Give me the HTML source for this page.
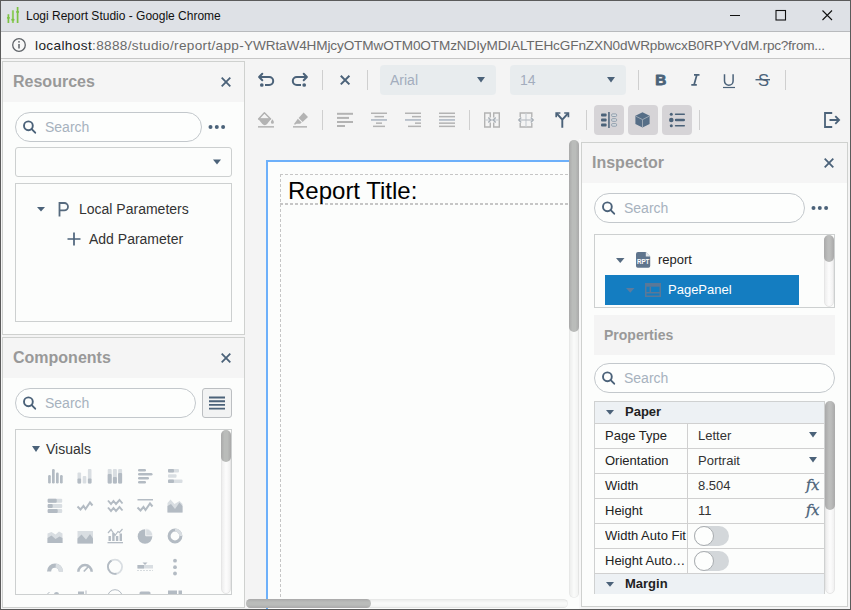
<!DOCTYPE html>
<html>
<head>
<meta charset="utf-8">
<title>Logi Report Studio - Google Chrome</title>
<style>
*{box-sizing:border-box;margin:0;padding:0}
html,body{width:851px;height:610px;overflow:hidden;background:#f4f4f4;font-family:"Liberation Sans",Arial,sans-serif;}
#win{position:absolute;left:0;top:0;width:851px;height:610px;overflow:hidden;background:#f4f4f4}
#win div,#win svg{position:absolute}
#win svg{overflow:visible}
.t{white-space:nowrap;line-height:1}
#tb{left:0;top:0;width:851px;height:31px;background:#dee1e6}
#ab{left:0;top:31px;width:851px;height:27px;background:#f8f8f8}
#abl{left:0;top:58px;width:851px;height:1px;background:#c6c6c6}
.panel{border:1px solid #cfd1cf;background:#fcfdfc}
.phead{height:40px;background:#f5f5f5}
.ptitle{font-weight:bold;font-size:16px;color:#999}
.search{border:1px solid #c3c8cc;border-radius:15px;background:#fdfefd;height:30px}
.ph{font-size:14px;color:#a7b2be}
.box{border:1px solid #cdd0d0;background:#fcfdfc}
.sep{width:1px;height:20px;background:#cfcfcf}
.dd{background:#e8ecee;border-radius:4px;height:30px}
.tg{background:#d6d4d7;border-radius:4px;width:30px;height:30px}
.lbl{font-size:13px;color:#222}
.val{font-size:13px;color:#333}
.hl{height:1px;background:#d0d0d0}
.fx{font-family:"DejaVu Serif","Liberation Serif",serif;font-style:italic;font-size:14.5px;color:#4b6279;-webkit-text-stroke:0.3px #4b6279}
.sw{width:35px;height:20px;border-radius:10px;background:#d3d7da}
.kn{width:20px;height:20px;border-radius:10px;background:#fdfefd;border:1px solid #a9adb0}
</style>
</head>
<body>
<div id="win">
<!-- CHROME -->
<div id="tb"></div>
<div id="ab"></div>
<div id="abl"></div>
<div style="left:0;top:31px;width:851px;height:1px;background:#b8babd"></div>
<svg style="left:0;top:0" width="24" height="26" viewBox="0 0 24 26" fill="none" stroke="#7bc143" stroke-width="1.700">
 <path d="M8.400 14.300v8.600M17.600 7.100v15.800"/><path d="M12.900 10.300v12.600" stroke-width="2" stroke="#8fcc5f"/>
 <rect x="6.900" y="16.900" width="3" height="1.900" rx=".8" fill="#7bc143" stroke="none"/><rect x="11.300" y="18.800" width="3.200" height="1.900" rx=".8" fill="#7bc143" stroke="none"/><rect x="16.100" y="11" width="3" height="1.900" rx=".8" fill="#7bc143" stroke="none"/>
</svg>
<div class="t" id="ttl" style="left:26px;top:10px;font-size:12px;color:#111">Logi Report Studio - Google Chrome</div>
<svg style="left:725px;top:5px" width="120" height="22" viewBox="0 0 120 22" fill="none" stroke="#111" stroke-width="1">
 <path d="M5 10.5h10"/><rect x="51" y="5.500" width="9.500" height="9.500" stroke-width="1.100"/><path d="M97.500 5.500l9.500 9.500M107 5.500l-9.500 9.500" stroke-width="1.100"/>
</svg>
<svg style="left:11px;top:37px" width="16" height="16" viewBox="0 0 16 16" fill="none" stroke="#5f6368" stroke-width="1.300">
 <circle cx="8" cy="8" r="6.300"/><path d="M8 7v4.500" stroke-width="1.500"/><circle cx="8" cy="4.800" r=".9" fill="#5f6368" stroke="none"/>
</svg>
<div class="t" id="url" style="left:35px;top:39px;font-size:13.6px;color:#6a6a6a"><span id="u1" style="color:#202124;letter-spacing:0.38px">localhost</span><span id="u2" style="letter-spacing:0.32px">:8888/studio/report/app-</span><span id="u3" style="letter-spacing:-0.136px">YWRtaW4HMjcyOTMwOTM0OTMzNDIyMDIALTEHcGFnZXN0dWRpbwcxB0RPYVdM</span><span id="u4" style="letter-spacing:-0.25px">.rpc?from...</span></div>
<!-- RESOURCES -->
<div class="panel" style="left:2px;top:61px;width:243px;height:274px"></div>
<div class="phead" style="left:3px;top:62px;width:241px"></div>
<div class="t ptitle" style="left:13px;top:74px">Resources</div>
<svg style="left:221px;top:77px" width="10" height="10" viewBox="0 0 10 10" stroke="#4b6279" stroke-width="1.800" fill="none"><path d="M.7.7l8.600 8.600M9.300.7L.7 9.300"/></svg>
<div class="search" style="left:15px;top:112px;width:187px"></div>
<svg style="left:23px;top:120px" width="14" height="14" viewBox="0 0 14 14" fill="none" stroke="#4b6279" stroke-width="1.900" stroke-linecap="round"><circle cx="5.400" cy="5.800" r="4.400"/><path d="M8.700 9.100l3.500 3.600"/></svg>
<div class="t ph" style="left:45px;top:120px">Search</div>
<svg style="left:208px;top:124px" width="18" height="6" viewBox="0 0 18 6" fill="#4b6279"><circle cx="2.500" cy="3" r="2"/><circle cx="8.800" cy="3" r="2"/><circle cx="15.100" cy="3" r="2"/></svg>
<div class="box" style="left:15px;top:147px;width:217px;height:30px;border-radius:3px"></div>
<svg style="left:213px;top:159px" width="8" height="6" viewBox="0 0 8 6" fill="#4b6279"><path d="M0 .5h8L4 5.500z"/></svg>
<div class="box" style="left:15px;top:183px;width:217px;height:139px"></div>
<svg style="left:37px;top:207px" width="8" height="5" viewBox="0 0 8 5" fill="#4b6279"><path d="M0 0h8L4 4.500z"/></svg>
<svg style="left:58px;top:202px" width="12" height="15" viewBox="0 0 12 15" fill="none" stroke="#566a7e" stroke-width="1.800"><path d="M1.500 14.500V1h4.800a3.700 3.700 0 0 1 0 7.400H1.500"/></svg>
<div class="t" style="left:79px;top:202px;font-size:14px;color:#333">Local Parameters</div>
<svg style="left:67px;top:232px" width="14" height="14" viewBox="0 0 14 14" fill="none" stroke="#4b6279" stroke-width="1.700"><path d="M7 .5v13M.5 7h13"/></svg>
<div class="t" style="left:89px;top:232px;font-size:14px;color:#333">Add Parameter</div>

<!-- COMPONENTS -->
<div class="panel" style="left:2px;top:337px;width:243px;height:271px"></div>
<div class="phead" style="left:3px;top:338px;width:241px"></div>
<div class="t ptitle" style="left:13px;top:350px">Components</div>
<svg style="left:221px;top:353px" width="10" height="10" viewBox="0 0 10 10" stroke="#4b6279" stroke-width="1.800" fill="none"><path d="M.7.7l8.600 8.600M9.300.7L.7 9.300"/></svg>
<div class="search" style="left:15px;top:388px;width:181px"></div>
<svg style="left:23px;top:396px" width="14" height="14" viewBox="0 0 14 14" fill="none" stroke="#4b6279" stroke-width="1.900" stroke-linecap="round"><circle cx="5.400" cy="5.800" r="4.400"/><path d="M8.700 9.100l3.500 3.600"/></svg>
<div class="t ph" style="left:45px;top:396px">Search</div>
<div style="left:202px;top:388px;width:30px;height:30px;border:1px solid #bcbfc2;border-radius:3px;background:#f2f3f3"></div>
<svg style="left:209px;top:396px" width="16" height="14" viewBox="0 0 16 14" stroke="#4b6279" stroke-width="1.900" fill="none"><path d="M0 1.500h16M0 5.200h16M0 8.900h16M0 12.600h16"/></svg>
<div class="box" style="left:15px;top:429px;width:217px;height:166px"></div>
<div style="left:221px;top:430px;width:10px;height:164px;border-radius:5px;background:linear-gradient(90deg,#eee,#fbfbfb 45%,#fbfbfb 60%,#f1f1f1);border:1px solid #e6e6e6"></div>
<div style="left:221px;top:430px;width:10px;height:32px;border-radius:5px;background:linear-gradient(90deg,#a9a9a9,#babcba 35%,#babcba 65%,#a9a9a9)"></div>
<svg style="left:32px;top:446px" width="8" height="6" viewBox="0 0 8 6" fill="#4b6279"><path d="M0 0h8L4 6z"/></svg>
<div class="t" style="left:46px;top:442px;font-size:14px;color:#333">Visuals</div>
<!-- component icons -->
<div style="left:16px;top:430px;width:205px;height:164px;overflow:hidden">
<svg style="left:31px;top:38px" width="16" height="16" viewBox="0 0 16 16"><rect x="1.1" y="7" width="2.700" height="8.5" rx="1.3" fill="#b3bbc3"/><rect x="5" y="1" width="2.700" height="14.5" rx="1.3" fill="#b3bbc3"/><rect x="9" y="4.5" width="2.700" height="11" rx="1.3" fill="#b3bbc3"/><rect x="13" y="7" width="2.700" height="8.5" rx="1.3" fill="#b3bbc3"/></svg>
<svg style="left:61px;top:38px" width="16" height="16" viewBox="0 0 16 16"><rect x="0.5" y="4.5" width="3.6" height="11" rx="1" fill="#d9dee2"/><rect x="0.5" y="10.5" width="3.6" height="5" rx="1" fill="#b3bbc3"/><rect x="5.7" y="8" width="3.6" height="7.5" rx="1" fill="#d9dee2"/><rect x="10.9" y="1" width="3.6" height="14.5" rx="1" fill="#d9dee2"/><rect x="10.9" y="10.5" width="3.6" height="5" rx="1" fill="#b3bbc3"/></svg>
<svg style="left:91px;top:38px" width="16" height="16" viewBox="0 0 16 16"><rect x="0.7" y="1" width="4" height="14.5" rx="1" fill="#d9dee2"/><rect x="0.7" y="6" width="4" height="9.5" rx="1" fill="#b3bbc3"/><rect x="5.9" y="1" width="4" height="14.5" rx="1" fill="#d9dee2"/><rect x="5.9" y="9" width="4" height="6.5" rx="1" fill="#b3bbc3"/><rect x="11.1" y="1" width="4" height="14.5" rx="1" fill="#d9dee2"/><rect x="11.1" y="5" width="4" height="10.5" rx="1" fill="#b3bbc3"/></svg>
<svg style="left:121px;top:38px" width="16" height="16" viewBox="0 0 16 16"><rect x="1" y="1" width="8" height="2.6" rx="1.3" fill="#b3bbc3"/><rect x="1" y="5" width="14.5" height="2.6" rx="1.3" fill="#b3bbc3"/><rect x="1" y="9" width="11" height="2.6" rx="1.3" fill="#b3bbc3"/><rect x="1" y="13" width="8" height="2.6" rx="1.3" fill="#b3bbc3"/></svg>
<svg style="left:151px;top:38px" width="16" height="16" viewBox="0 0 16 16"><rect x="1" y="1" width="11" height="3.6" rx="1" fill="#d9dee2"/><rect x="1" y="1" width="6" height="3.6" rx="1" fill="#b3bbc3"/><rect x="1" y="6.2" width="8.5" height="3.6" rx="1" fill="#d9dee2"/><rect x="1" y="11.4" width="14.5" height="3.6" rx="1" fill="#d9dee2"/><rect x="1" y="11.4" width="6" height="3.6" rx="1" fill="#b3bbc3"/></svg>
<svg style="left:31px;top:68px" width="16" height="16" viewBox="0 0 16 16"><rect x="0.7" y="0.7" width="14.5" height="4" rx="1" fill="#d9dee2"/><rect x="0.7" y="0.7" width="9" height="4" rx="1" fill="#b3bbc3"/><rect x="0.7" y="5.9" width="14.5" height="4" rx="1" fill="#d9dee2"/><rect x="0.7" y="5.9" width="5" height="4" rx="1" fill="#b3bbc3"/><rect x="0.7" y="11.1" width="14.5" height="4" rx="1" fill="#d9dee2"/><rect x="0.7" y="11.1" width="10" height="4" rx="1" fill="#b3bbc3"/></svg>
<svg style="left:61px;top:68px" width="16" height="16" viewBox="0 0 16 16"><polyline points="0.5,8.5 3.5,11.5 6.5,8 8.5,11 13,4.5 15.5,7.5" fill="none" stroke="#b3bbc3" stroke-width="2"/></svg>
<svg style="left:91px;top:68px" width="16" height="16" viewBox="0 0 16 16"><polyline points="1,2.5 4,6 6.5,3 9,6 12.5,2 15.5,5.5" fill="none" stroke="#b3bbc3" stroke-width="1.900"/><polyline points="1,9.5 4,13 6.5,10 9,13 12.500,9 15.5,12.5" fill="none" stroke="#b3bbc3" stroke-width="1.900"/></svg>
<svg style="left:121px;top:68px" width="16" height="16" viewBox="0 0 16 16"><rect x="0.5" y="1" width="15.5" height="1.5" fill="#b3bbc3"/><polyline points="0.5,9.5 3.5,12.5 6.5,9 8.5,12 13,5.5 15.5,8.5" fill="none" stroke="#b3bbc3" stroke-width="2"/></svg>
<svg style="left:151px;top:68px" width="16" height="16" viewBox="0 0 16 16"><path d="M0.5 14.5V5l3-3.500 4 4.500 5-3 3 3v8.500z" fill="#d9dee2"/><path d="M0.500 14.500V8l3.500-2 4 5 4.500-6.500 3 3.500v6.500z" fill="#b3bbc3"/></svg>
<svg style="left:31px;top:98px" width="16" height="16" viewBox="0 0 16 16"><path d="M0.5 15V5.500l4-1.500 4 2.500 3.500-3 3.500 2v9.500z" fill="#d9dee2"/><path d="M0.500 15V10l4-2.500 4 3.500 4-2.500 3 1.500v5z" fill="#b3bbc3"/></svg>
<svg style="left:61px;top:98px" width="16" height="16" viewBox="0 0 16 16"><rect x="0.5" y="3" width="15.500" height="12.500" fill="#d9dee2"/><path d="M0.500 15.500V10.500l4-4 4.500 5 4-5.500 3 4.500v5z" fill="#b3bbc3"/></svg>
<svg style="left:91px;top:98px" width="16" height="16" viewBox="0 0 16 16"><rect x="1.5" y="8" width="2.4" height="5" rx="0" fill="#b3bbc3"/><rect x="5.2" y="5" width="2.4" height="8" rx="0" fill="#b3bbc3"/><rect x="8.9" y="8" width="2.4" height="5" rx="0" fill="#b3bbc3"/><rect x="12.6" y="5.5" width="2.4" height="7.5" rx="0" fill="#b3bbc3"/><rect x="0.5" y="14" width="15.5" height="1.300" fill="#b3bbc3"/><polyline points="1,5 4,1.500 8,7.500 11,3.500 12.500,4.500 15.500,1" fill="none" stroke="#b3bbc3" stroke-width="1.2"/></svg>
<svg style="left:121px;top:98px" width="16" height="16" viewBox="0 0 16 16"><circle cx="8" cy="8.500" r="7.300" fill="#b3bbc3"/><path d="M8.700 7.800V0.600a7.300 7.300 0 0 1 7.200 7.200z" fill="#d9dee2" stroke="#fcfdfc" stroke-width="0.800"/></svg>
<svg style="left:151px;top:98px" width="16" height="16" viewBox="0 0 16 16"><circle cx="8" cy="8" r="5.900" fill="none" stroke="#b3bbc3" stroke-width="3"/><path d="M8 2.100a5.900 5.900 0 0 1 5.900 5.900" fill="none" stroke="#d9dee2" stroke-width="3"/></svg>
<svg style="left:31px;top:128px" width="16" height="16" viewBox="0 0 16 16"><path d="M2.100 13.500a5.900 5.900 0 0 1 11.800 0" fill="none" stroke="#b3bbc3" stroke-width="4.200"/><path d="M8.700 7.640a5.900 5.900 0 0 1 5.200 5.860" fill="none" stroke="#d9dee2" stroke-width="4.200"/></svg>
<svg style="left:61px;top:128px" width="16" height="16" viewBox="0 0 16 16"><path d="M1.300 13.800a6.700 6.700 0 0 1 13.400 0" fill="none" stroke="#b3bbc3" stroke-width="2.500"/><path d="M6.800 13.500l4.700-5" stroke="#b3bbc3" stroke-width="1.700" fill="none"/></svg>
<svg style="left:91px;top:128px" width="16" height="16" viewBox="0 0 16 16"><circle cx="8" cy="8.800" r="7.100" fill="none" stroke="#d9dee2" stroke-width="1.800"/><path d="M9.500 15.740a7.100 7.100 0 0 1-8.600-6.940 7.100 7.100 0 0 1 3.600-6.150" fill="none" stroke="#b3bbc3" stroke-width="1.800"/></svg>
<svg style="left:121px;top:128px" width="16" height="16" viewBox="0 0 16 16"><rect x="0.5" y="7" width="15.500" height="3.500" fill="#d9dee2"/><rect x="0.500" y="7" width="6.500" height="3.500" fill="#b3bbc3"/><path d="M5.500 4.500h5L8 7z" fill="#b3bbc3"/><path d="M0.500 12.500h15.500" stroke="#b3bbc3" stroke-width="1" stroke-dasharray="1 2" fill="none"/></svg>
<svg style="left:151px;top:128px" width="16" height="16" viewBox="0 0 16 16"><circle cx="8" cy="2.700" r="1.900" fill="#b3bbc3"/><circle cx="8" cy="9.200" r="1.900" fill="#b3bbc3"/><circle cx="8" cy="15.500" r="1.900" fill="#b3bbc3"/></svg>
<svg style="left:31px;top:158px" width="16" height="16" viewBox="0 0 16 16"><path d="M0.500 5.500l2-1" stroke="#b3bbc3" stroke-width="1" fill="none"/><circle cx="9.500" cy="6.500" r="2.500" fill="#b3bbc3"/></svg>
<svg style="left:61px;top:158px" width="16" height="16" viewBox="0 0 16 16"><rect x="1" y="3.500" width="6" height="8" fill="#b3bbc3"/><rect x="8.500" y="2.500" width="1" height="9" fill="#b3bbc3"/></svg>
<svg style="left:91px;top:158px" width="16" height="16" viewBox="0 0 16 16"><circle cx="8" cy="9" r="7.300" fill="none" stroke="#b3bbc3" stroke-width="1"/></svg>
<svg style="left:121px;top:158px" width="16" height="16" viewBox="0 0 16 16"><rect x="2.500" y="3.500" width="11" height="9" rx="1.500" fill="#b3bbc3"/></svg>
<svg style="left:151px;top:158px" width="16" height="16" viewBox="0 0 16 16"><rect x="1" y="2.500" width="9" height="9" fill="#b3bbc3"/><rect x="11.500" y="2.500" width="3.500" height="9" fill="#b3bbc3"/></svg>
</div>
<!-- TOOLBAR ROW 1 -->
<svg style="left:258px;top:73px" width="17" height="14" viewBox="0 0 17 14" fill="none" stroke="#4b6279" stroke-width="2" stroke-linejoin="round"><path d="M4.300 .8L1.100 4l3.200 3.200" stroke-linecap="round"/><path d="M1.300 4h9.900a4 4 0 0 1 0 8H7"/><circle cx="3.800" cy="12" r="1.850" fill="#4b6279" stroke="none"/></svg>
<svg style="left:291px;top:73px" width="17" height="14" viewBox="0 0 17 14" fill="none" stroke="#4b6279" stroke-width="2" stroke-linejoin="round"><path d="M12.700 .8L15.900 4l-3.200 3.200" stroke-linecap="round"/><path d="M15.700 4H5.800a4 4 0 0 0 0 8h4.200"/><circle cx="13.200" cy="12" r="1.850" fill="#4b6279" stroke="none"/></svg>
<div class="sep" style="left:322px;top:70px"></div>
<svg style="left:340px;top:75px" width="10" height="10" viewBox="0 0 10 10" stroke="#4b6279" stroke-width="2" fill="none"><path d="M.8.800l8.600 8.600M9.400.8L.8 9.400"/></svg>
<div class="sep" style="left:367px;top:70px"></div>
<div class="dd" style="left:380px;top:65px;width:116px"></div>
<div class="t" style="left:390px;top:73px;font-size:14px;color:#a3adbd">Arial</div>
<svg style="left:477px;top:77px" width="8" height="6" viewBox="0 0 8 6" fill="#4b6279"><path d="M0 0h8L4 5.500z"/></svg>
<div class="dd" style="left:510px;top:65px;width:116px"></div>
<div class="t" style="left:520px;top:73px;font-size:14px;color:#a3adbd">14</div>
<svg style="left:607px;top:77px" width="8" height="6" viewBox="0 0 8 6" fill="#4b6279"><path d="M0 0h8L4 5.500z"/></svg>
<div class="sep" style="left:638px;top:70px"></div>
<svg style="left:655px;top:73px" width="12" height="13" viewBox="0 0 12 13"><text x="0.200" y="12.300" font-family="Liberation Sans, Arial, sans-serif" font-weight="bold" font-size="15.300" fill="#4b6279" stroke="#4b6279" stroke-width="0.900" stroke-linejoin="round">B</text></svg>
<svg style="left:691px;top:74px" width="9" height="12" viewBox="0 0 9 12" fill="none" stroke="#4b6279" stroke-width="1.700"><path d="M3 .9h5.500M.3 10.900h5.500M5.800.9L3 10.900" /></svg>
<svg style="left:723px;top:74px" width="12" height="15" viewBox="0 0 12 15" fill="none" stroke="#4b6279" stroke-width="1.500"><path d="M1.500 .3v6.700a4.300 4.300 0 0 0 8.600 0V.3"/><path d="M0 13.500h12" stroke-width="1.200"/></svg>
<svg style="left:755px;top:73px" width="16" height="14" viewBox="0 0 16 14"><text x="3" y="12.500" font-family="Liberation Sans, Arial, sans-serif" font-size="16.500" fill="#4b6279">S</text><rect x="0.500" y="6" width="14.500" height="1.400" fill="#4b6279"/></svg>
<div class="sep" style="left:785px;top:70px"></div>

<!-- TOOLBAR ROW 2 -->
<svg style="left:258px;top:112px" width="16" height="16" viewBox="0 0 16 16"><path d="M6.400 .8L.6 7h12z" fill="none" stroke="#b0b0b0" stroke-width="1.400" stroke-linejoin="round"/><path d="M0 6.800h13.200l-4.100 5.200a3 3 0 0 1-4.700 0z" fill="#b3b3b3"/><path d="M14.400 7.300c1 1.500 1.500 2.300 1.500 3a1.500 1.500 0 0 1-3 0c0-.7.500-1.500 1.500-3z" fill="#b3b3b3"/><rect x="0" y="14.100" width="16" height="1.500" fill="#b3b3b3"/></svg>
<svg style="left:293px;top:112px" width="16" height="16" viewBox="0 0 16 16" fill="#b3b3b3"><path d="M10.600.6l4.400 4.400-5.400 4.900-4-4z"/><path d="M4.800 6.700l3.900 3.900-1.500 1.200H3.600l-1.700.9L1 12l2.600-3.600z"/><rect x="0" y="14.100" width="14" height="1.500"/></svg>
<div class="sep" style="left:322px;top:110px"></div>
<svg style="left:337px;top:112px" width="16" height="16" viewBox="0 0 16 16" fill="#b3b3b3"><rect x="0" y="0.800" width="16" height="2"/><rect x="0" y="4.900" width="12" height="2"/><rect x="0" y="9" width="16" height="2"/><rect x="0" y="13" width="8" height="2"/></svg>
<svg style="left:371px;top:112px" width="16" height="16" viewBox="0 0 16 16" fill="#b3b3b3"><rect x="0" y="0.500" width="16" height="1.500"/><rect x="3.500" y="3.900" width="9.500" height="1.500"/><rect x="0" y="7.200" width="16" height="1.500" fill="#aab4c0"/><rect x="5" y="10.400" width="6" height="1.500"/><rect x="2" y="13.600" width="12" height="1.500"/></svg>
<svg style="left:405px;top:112px" width="16" height="16" viewBox="0 0 16 16" fill="#b3b3b3"><rect x="0" y="0.500" width="16" height="1.500"/><rect x="7" y="3.900" width="9" height="1.500"/><rect x="0" y="7.200" width="16" height="1.500" fill="#aab4c0"/><rect x="10" y="10.400" width="6" height="1.500"/><rect x="3" y="13.600" width="13" height="1.500"/></svg>
<svg style="left:439px;top:112px" width="16" height="16" viewBox="0 0 16 16" fill="#b3b3b3"><rect x="0" y="0.500" width="16" height="1.500"/><rect x="0" y="3.900" width="16" height="1.500"/><rect x="0" y="7.200" width="16" height="1.500" fill="#aab4c0"/><rect x="0" y="10.400" width="16" height="1.500"/><rect x="0" y="13.600" width="16" height="1.500"/></svg>
<div class="sep" style="left:469px;top:110px"></div>
<svg style="left:484px;top:112px" width="16" height="16" viewBox="0 0 16 16" fill="none" stroke="#b3b3b3" stroke-width="1.400"><path d="M6.300 5.500V1H.7v14h5.600v-4.500M9.700 5.500V1h5.600v14H9.700v-4.500"/><path d="M.7 8h14.600" stroke="#c9ced3" stroke-width="1.200"/><path d="M4.300 5.600L6.700 8l-2.400 2.400M11.700 5.600L9.300 8l2.400 2.400" stroke="#a9b0b7" stroke-width="1.400"/></svg>
<svg style="left:518px;top:112px" width="16" height="16" viewBox="0 0 16 16" fill="none" stroke="#b3b3b3" stroke-width="1.400"><path d="M2.200 5V1h11.600v4M2.200 11v4h11.600v-4"/><path d="M8 1v14" stroke="#c9ced3" stroke-width="1.200"/><path d="M1 8h14" stroke="#b7bdc3" stroke-width="1.200"/><path d="M3.200 5.600L.8 8l2.400 2.400M12.800 5.600L15.200 8l-2.400 2.400" stroke="#a9b0b7" stroke-width="1.400"/></svg>
<svg style="left:555px;top:112px" width="15" height="16" viewBox="0 0 15 16" fill="none" stroke="#4b6279" stroke-width="1.900"><path d="M7.300 15.800V7.600L1.700 1.500M7.300 7.600l5.600-6.100"/><path d="M1.200 5.200V1h4.200M9.200 1h4.200v4.200" stroke-width="1.700"/></svg>
<div class="sep" style="left:586px;top:110px"></div>
<div class="tg" style="left:594px;top:105px"></div>
<div class="tg" style="left:628px;top:105px"></div>
<div class="tg" style="left:662px;top:105px"></div>
<svg style="left:601px;top:112px" width="16" height="16" viewBox="0 0 16 16"><g fill="#4b6279"><rect x="0" y="1.600" width="5.600" height="3" rx="1"/><rect x="0" y="6.500" width="5.600" height="3" rx="1"/><rect x="0" y="11.400" width="5.600" height="3" rx="1"/><rect x="7.200" y="0" width="1.500" height="16"/></g><g fill="#d7dcdf" stroke="#8092a3" stroke-width="0.800"><rect x="10.600" y="1.900" width="5" height="2.600" rx="1"/><rect x="10.600" y="6.700" width="5" height="2.600" rx="1"/><rect x="10.600" y="11.600" width="5" height="2.600" rx="1"/></g></svg>
<svg style="left:635px;top:112px" width="15" height="16" viewBox="0 0 15 16"><path d="M7.500 0.200L14.600 3.800v8.100L7.500 15.600 0.400 11.900V3.800z" fill="#566e87"/><path d="M0.800 4.200L7.500 7.600l6.700-3.400M7.500 7.600v7.800" fill="none" stroke="#a3aeb9" stroke-width="0.900"/></svg>
<svg style="left:669px;top:112px" width="16" height="16" viewBox="0 0 16 16" fill="#4b6279"><circle cx="2.300" cy="2.300" r="1.500"/><circle cx="2.300" cy="8" r="2.300"/><circle cx="2.300" cy="13.700" r="1.500"/><rect x="5.800" y="1.600" width="10.200" height="1.400" rx=".7"/><rect x="5.800" y="6.700" width="10.200" height="2.600" rx="1.300"/><rect x="5.800" y="13" width="10.200" height="1.400" rx=".7"/></svg>
<div class="sep" style="left:699px;top:110px"></div>
<svg style="left:824px;top:112px" width="16" height="16" viewBox="0 0 16 16" fill="none" stroke="#4b6279" stroke-width="1.800"><path d="M8.200 1H1v14h7.200"/><path d="M5.500 8h9.600M11.300 4.200L15.100 8l-3.800 3.800"/></svg>
<!-- CANVAS -->
<div style="left:579px;top:139px;width:2px;height:470px;background:#f8f8f8"></div>
<div style="left:246px;top:139px;width:333px;height:470px;overflow:hidden;background:#f4f4f4">
  <div style="left:20px;top:21px;width:400px;height:600px;border:2px solid #6db0fa;background:#fcfdfc"></div>
  <div style="left:34px;top:35px;width:301px;height:1px;background:repeating-linear-gradient(90deg,#c6c6c6 0 3px,transparent 3px 5px)"></div>
  <div style="left:34px;top:64px;width:301px;height:2px;background:repeating-linear-gradient(90deg,#c6c6c6 0 3px,transparent 3px 5px)"></div>
  <div style="left:34px;top:35px;width:1px;height:435px;background:repeating-linear-gradient(180deg,#c6c6c6 0 3px,transparent 3px 5px)"></div>
  <div class="t" id="rt" style="left:42px;top:40px;font-size:24px;color:#000">Report Title:</div>
  <!-- v scrollbar -->
  <div style="left:323px;top:1px;width:10px;height:458px;border-radius:5px;background:linear-gradient(90deg,rgba(0,0,0,.06),rgba(0,0,0,.01) 45%,rgba(0,0,0,.01) 60%,rgba(0,0,0,.04));border:1px solid rgba(0,0,0,.05)"></div>
  <div style="left:323px;top:1px;width:10px;height:192px;border-radius:5px;background:linear-gradient(90deg,#a9a9a9,#babcba 35%,#babcba 65%,#a9a9a9)"></div>
  <!-- h scrollbar -->
  <div style="left:0;top:460px;width:322px;height:9px;border-radius:5px;background:linear-gradient(rgba(0,0,0,.06),rgba(0,0,0,.01) 45%,rgba(0,0,0,.01) 60%,rgba(0,0,0,.04));border:1px solid rgba(0,0,0,.05)"></div>
  <div style="left:0;top:460px;width:125px;height:9px;border-radius:5px;background:linear-gradient(#a9a9a9,#babcba 35%,#babcba 65%,#a9a9a9)"></div>
</div>
<!-- INSPECTOR -->
<div class="panel" style="left:581px;top:142px;width:267px;height:465px"></div>
<div class="phead" style="left:582px;top:143px;width:265px"></div>
<div class="t ptitle" style="left:592px;top:155px">Inspector</div>
<svg style="left:824px;top:158px" width="10" height="10" viewBox="0 0 10 10" stroke="#4b6279" stroke-width="1.800" fill="none"><path d="M.7.700l8.600 8.600M9.300.7L.7 9.300"/></svg>
<div class="search" style="left:594px;top:193px;width:211px"></div>
<svg style="left:602px;top:201px" width="14" height="14" viewBox="0 0 14 14" fill="none" stroke="#4b6279" stroke-width="1.900" stroke-linecap="round"><circle cx="5.400" cy="5.800" r="4.400"/><path d="M8.700 9.100l3.500 3.600"/></svg>
<div class="t ph" style="left:624px;top:201px">Search</div>
<svg style="left:811px;top:205px" width="18" height="6" viewBox="0 0 18 6" fill="#4b6279"><circle cx="2.500" cy="3" r="2"/><circle cx="8.800" cy="3" r="2"/><circle cx="15.100" cy="3" r="2"/></svg>
<!-- tree -->
<div class="box" style="left:594px;top:234px;width:241px;height:74px"></div>
<div style="left:824px;top:235px;width:10px;height:72px;border-radius:5px;background:linear-gradient(90deg,#eee,#fbfbfb 45%,#fbfbfb 60%,#f1f1f1);border:1px solid #e6e6e6"></div>
<div style="left:824px;top:235px;width:10px;height:27px;border-radius:5px;background:linear-gradient(90deg,#a9a9a9,#bcbdbc 40%,#bcbdbc 60%,#a9a9a9)"></div>
<svg style="left:616px;top:258px" width="9" height="5" viewBox="0 0 9 5" fill="#566b81"><path d="M0 0h8.500L4.250 5z"/></svg>
<svg style="left:636px;top:252px" width="14" height="16" viewBox="0 0 14 16"><path d="M2 0h7.800L14.200 4.400V14a1.800 1.800 0 0 1-1.800 1.800H1.800A1.800 1.800 0 0 1 0 14V2a2 2 0 0 1 2-2z" fill="#5f758d"/><path d="M9.800 0v4.400h4.400z" fill="#e3e8ec"/><text x="1" y="12" font-family="Liberation Sans, Arial, sans-serif" font-weight="bold" font-size="7.300" fill="#fff" textLength="12.400" lengthAdjust="spacingAndGlyphs">RPT</text></svg>
<div class="t" style="left:658px;top:253px;font-size:13px;color:#222">report</div>
<div style="left:605px;top:275px;width:194px;height:30px;background:#147dc1"></div>
<svg style="left:626px;top:288px" width="9" height="5" viewBox="0 0 9 5" fill="#5c7b9d"><path d="M0 0h8.500L4.250 4.800z"/></svg>
<svg style="left:645px;top:283px" width="16" height="14" viewBox="0 0 16 14" fill="none" stroke="#5b7897" stroke-width="1.500"><rect x=".75" y=".75" width="14.500" height="12.500"/><path d="M.75 2.200h14.500" stroke-width="3"/><path d="M5.300 3.500v6M.75 9.800h14.500"/></svg>
<div class="t" style="left:668px;top:283px;font-size:13px;color:#fff">PagePanel</div>
<!-- properties -->
<div style="left:594px;top:315px;width:241px;height:40px;background:#f4f4f4"></div>
<div class="t" style="left:604px;top:328px;font-size:14px;font-weight:bold;color:#999">Properties</div>
<div class="search" style="left:594px;top:363px;width:241px"></div>
<svg style="left:602px;top:371px" width="14" height="14" viewBox="0 0 14 14" fill="none" stroke="#4b6279" stroke-width="1.900" stroke-linecap="round"><circle cx="5.400" cy="5.800" r="4.400"/><path d="M8.700 9.100l3.500 3.600"/></svg>
<div class="t ph" style="left:624px;top:371px">Search</div>
<!-- table -->
<div style="left:594px;top:401px;width:231px;height:193px;background:#fcfdfc;border:1px solid #cfd1d1;border-bottom:none"></div>
<div style="left:595px;top:402px;width:229px;height:21px;background:#edf1f4"></div>
<div style="left:595px;top:574px;width:229px;height:20px;background:#edf1f4"></div>
<div class="hl" style="left:595px;top:423px;width:229px"></div>
<div class="hl" style="left:595px;top:448px;width:229px"></div>
<div class="hl" style="left:595px;top:473px;width:229px"></div>
<div class="hl" style="left:595px;top:498px;width:229px"></div>
<div class="hl" style="left:595px;top:523px;width:229px"></div>
<div class="hl" style="left:595px;top:548px;width:229px"></div>
<div class="hl" style="left:595px;top:573px;width:229px"></div>
<div style="left:687px;top:424px;width:1px;height:149px;background:#d0d0d0"></div>
<svg style="left:606px;top:410px" width="8" height="5" viewBox="0 0 8 5" fill="#4b6279"><path d="M0 0h8L4 4.800z"/></svg>
<div class="t" style="left:625px;top:405px;font-size:13px;font-weight:bold;color:#222">Paper</div>
<svg style="left:606px;top:582px" width="8" height="5" viewBox="0 0 8 5" fill="#4b6279"><path d="M0 0h8L4 4.800z"/></svg>
<div class="t" style="left:625px;top:577px;font-size:13px;font-weight:bold;color:#222">Margin</div>
<div class="t lbl" style="left:605px;top:429px">Page Type</div>
<div class="t lbl" style="left:605px;top:454px">Orientation</div>
<div class="t lbl" style="left:605px;top:479px">Width</div>
<div class="t lbl" style="left:605px;top:504px">Height</div>
<div class="t lbl" style="left:605px;top:529px;width:82px;overflow:hidden">Width Auto Fit</div>
<div class="t lbl" style="left:605px;top:554px">Height Auto…</div>
<div class="t val" style="left:698px;top:429px">Letter</div>
<div class="t val" style="left:698px;top:454px">Portrait</div>
<div class="t val" style="left:698px;top:479px">8.504</div>
<div class="t val" style="left:698px;top:504px">11</div>
<svg style="left:809px;top:432px" width="8" height="6" viewBox="0 0 8 6" fill="#4b6279"><path d="M0 0h8L4 5.500z"/></svg>
<svg style="left:809px;top:457px" width="8" height="6" viewBox="0 0 8 6" fill="#4b6279"><path d="M0 0h8L4 5.500z"/></svg>
<div class="t fx" style="left:806px;top:478px">fx</div>
<div class="t fx" style="left:806px;top:503px">fx</div>
<div class="sw" style="left:694px;top:526px"></div><div class="kn" style="left:694px;top:526px"></div>
<div class="sw" style="left:694px;top:551px"></div><div class="kn" style="left:694px;top:551px"></div>
<!-- props scrollbar -->
<div style="left:825px;top:401px;width:10px;height:193px;border-radius:5px;background:linear-gradient(90deg,#eee,#fbfbfb 45%,#fbfbfb 60%,#f1f1f1);border:1px solid #e6e6e6"></div>
<div style="left:825px;top:401px;width:10px;height:109px;border-radius:5px;background:linear-gradient(90deg,#a9a9a9,#bcbdbc 40%,#bcbdbc 60%,#a9a9a9)"></div>
<!-- window border -->
<div style="left:0;top:0;width:851px;height:610px;border:1px solid #5b5b5b;pointer-events:none"></div>
</div>
</body>
</html>
